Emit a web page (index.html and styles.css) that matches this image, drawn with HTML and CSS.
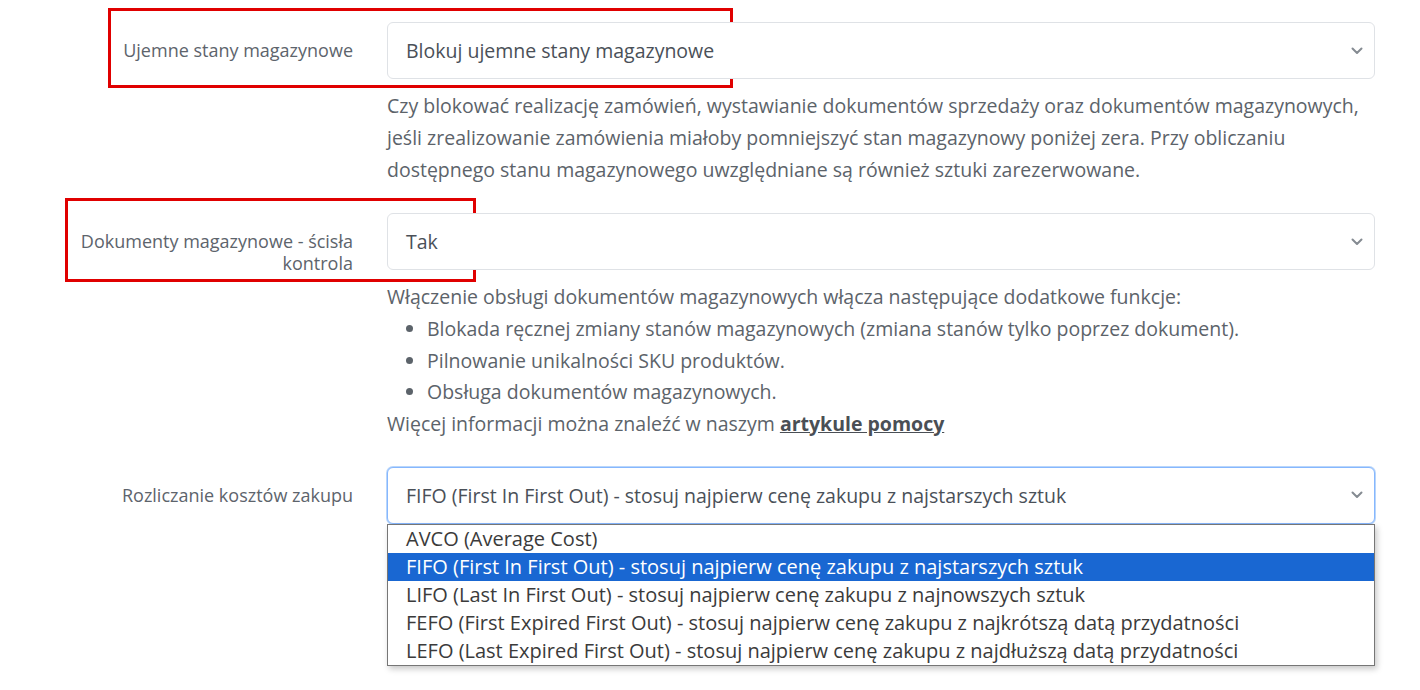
FILE: index.html
```html
<!DOCTYPE html>
<html lang="pl">
<head>
  <meta charset="UTF-8">
  <meta name="viewport" content="width=device-width, initial-scale=1.0">
  <title>Ustawienia magazynu</title>
  <link rel="stylesheet" href="styles.css">
</head>
<body>
  <div class="settings">

    <div class="row">
      <div class="mark mark-one"></div>
      <label class="row-label">Ujemne stany magazynowe</label>
      <div class="field">
        <div class="select">
          <span>Blokuj ujemne stany magazynowe</span>
          <svg class="chevron" width="12" height="8" viewBox="0 0 12 8"><path d="M1.5 1.5 6 6l4.5-4.5" fill="none" stroke="#858b92" stroke-width="2" stroke-linecap="round" stroke-linejoin="round"/></svg>
        </div>
        <p class="help">Czy blokować realizację zamówień, wystawianie dokumentów sprzedaży oraz dokumentów magazynowych, jeśli zrealizowanie zamówienia miałoby pomniejszyć stan magazynowy poniżej zera. Przy obliczaniu dostępnego stanu magazynowego uwzględniane są również sztuki zarezerwowane.</p>
      </div>
    </div>

    <div class="row">
      <div class="mark mark-two"></div>
      <label class="row-label">Dokumenty magazynowe - ścisła kontrola</label>
      <div class="field">
        <div class="select">
          <span>Tak</span>
          <svg class="chevron" width="12" height="8" viewBox="0 0 12 8"><path d="M1.5 1.5 6 6l4.5-4.5" fill="none" stroke="#858b92" stroke-width="2" stroke-linecap="round" stroke-linejoin="round"/></svg>
        </div>
        <div class="help">
          Włączenie obsługi dokumentów magazynowych włącza następujące dodatkowe funkcje:
          <ul>
            <li>Blokada ręcznej zmiany stanów magazynowych (zmiana stanów tylko poprzez dokument).</li>
            <li>Pilnowanie unikalności SKU produktów.</li>
            <li>Obsługa dokumentów magazynowych.</li>
          </ul>
          Więcej informacji można znaleźć w naszym <a href="#">artykule pomocy</a>
        </div>
      </div>
    </div>

    <div class="row">
      <label class="row-label">Rozliczanie kosztów zakupu</label>
      <div class="field">
        <div class="select select-open">
          <span>FIFO (First In First Out) - stosuj najpierw cenę zakupu z najstarszych sztuk</span>
          <svg class="chevron" width="12" height="8" viewBox="0 0 12 8"><path d="M1.5 1.5 6 6l4.5-4.5" fill="none" stroke="#858b92" stroke-width="2" stroke-linecap="round" stroke-linejoin="round"/></svg>
          <ul class="options">
            <li>AVCO (Average Cost)</li>
            <li class="selected">FIFO (First In First Out) - stosuj najpierw cenę zakupu z najstarszych sztuk</li>
            <li>LIFO (Last In First Out) - stosuj najpierw cenę zakupu z najnowszych sztuk</li>
            <li>FEFO (First Expired First Out) - stosuj najpierw cenę zakupu z najkrótszą datą przydatności</li>
            <li>LEFO (Last Expired First Out) - stosuj najpierw cenę zakupu z najdłuższą datą przydatności</li>
          </ul>
        </div>
      </div>
    </div>

  </div>
</body>
</html>
```

FILE: styles.css
```css
* {
  margin: 0;
  padding: 0;
  box-sizing: border-box;
}

body {
  font-family: "Open Sans", "DejaVu Sans", sans-serif;
  background-color: #fff;
  color: #5c636a;
  height: 690px;
  overflow: hidden;
}

.settings {
  display: flex;
  flex-direction: column;
  gap: 27px;
  padding-top: 22px;
}

.row {
  display: grid;
  grid-template-columns: 353px 988px;
  column-gap: 34px;
  position: relative;
}

.row-label {
  padding: 17px 0 0 60px;
  text-align: right;
  font-size: 18px;
  line-height: 22px;
  color: #5d646c;
}

.select {
  position: relative;
  height: 57px;
  display: flex;
  align-items: center;
  justify-content: space-between;
  padding: 0 11px 0 18px;
  border: 1px solid #dfe2e6;
  border-radius: 6px;
  font-size: 19.5px;
  color: #4a5058;
  background-color: #fff;
}

.select-open {
  border-color: #86b7fe;
  box-shadow: 0 0 0 1px #b9d6fb;
}

.chevron {
  flex-shrink: 0;
}

.help {
  margin-top: 11px;
  font-size: 19.5px;
  line-height: 32px;
  color: #5c636a;
}

.help ul {
  padding-left: 40px;
  line-height: 31.5px;
}

.help a {
  color: #4a4f55;
  font-weight: 700;
}

.options {
  position: absolute;
  top: 56px;
  left: -1px;
  right: -1px;
  list-style: none;
  background-color: #fff;
  border: 1px solid #767676;
  box-shadow: 2px 3px 6px rgba(0, 0, 0, 0.22);
  z-index: 2;
}

.options li {
  height: 28px;
  line-height: 28px;
  padding-left: 18px;
  font-size: 20px;
  color: #3b3b3b;
  white-space: nowrap;
}

.options li.selected {
  background-color: #1967d2;
  color: #fff;
}

.mark {
  position: absolute;
  border: 3px solid #e00000;
  pointer-events: none;
}

.mark-one {
  left: 108px;
  top: -14px;
  width: 625px;
  height: 80px;
}

.mark-two {
  left: 65px;
  top: -15px;
  width: 411px;
  height: 84px;
}
```
